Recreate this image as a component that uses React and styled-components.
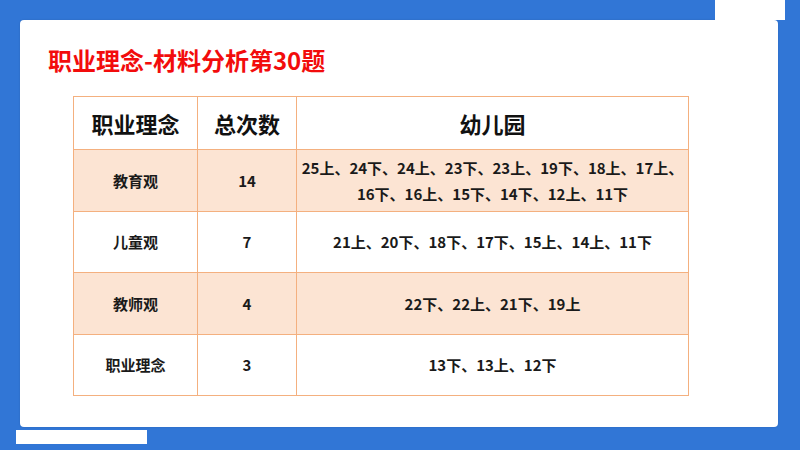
import React from "react";
import styled, { createGlobalStyle } from "styled-components";

const Global = createGlobalStyle`
  html, body { margin: 0; padding: 0; }
  body { width: 800px; height: 450px; overflow: hidden; background: #3176d6; }
  #root { width: 800px; height: 450px; }
`;

const Page = styled.div`
  position: relative;
  box-sizing: border-box;
  width: 800px;
  height: 450px;
  background: #3176d6;
  padding: 20px 22px 23px 20px;
  font-family: "Noto Sans CJK SC", "Noto Sans", sans-serif;
`;

const Card = styled.div`
  box-sizing: border-box;
  height: 100%;
  background: #ffffff;
  border-radius: 4px;
  padding: 24px 0 0 28px;
  box-shadow: 0 0 2px rgba(0, 0, 0, 0.15);
`;

const Tab = styled.div`
  position: absolute;
  background: #ffffff;
  top: ${(p) => p.$top}px;
  left: ${(p) => p.$left}px;
  width: ${(p) => p.$w}px;
  height: ${(p) => p.$h}px;
`;

const Title = styled.h1`
  margin: 0;
  color: #f20c0c;
  font-size: 24px;
  line-height: 32px;
  font-weight: 700;
  letter-spacing: 0;
`;

const Table = styled.table`
  margin: 20px 0 0 25px;
  border-collapse: collapse;
  width: 615px;
  table-layout: fixed;
`;

const Row = styled.tr`
  background: ${(p) => (p.$shaded ? "#fce4d3" : "#ffffff")};
  height: ${(p) => p.$h}px;
`;

const Head = styled.th`
  border: 1.5px solid #f4b07f;
  font-size: 22px;
  font-weight: 700;
  color: #111;
  padding: 0;
  text-align: center;
`;

const Cell = styled.td`
  border: 1.5px solid #f4b07f;
  font-size: 15px;
  font-weight: 700;
  color: #1a1a1a;
  line-height: 26px;
  padding: 0;
  text-align: center;
`;

const rows = [
  { name: "教育观", n: "14", lines: ["25上、24下、24上、23下、23上、19下、18上、17上、", "16下、16上、15下、14下、12上、11下"], shaded: true, h: 62 },
  { name: "儿童观", n: "7", lines: ["21上、20下、18下、17下、15上、14上、11下"], shaded: false, h: 61 },
  { name: "教师观", n: "4", lines: ["22下、22上、21下、19上"], shaded: true, h: 62 },
  { name: "职业理念", n: "3", lines: ["13下、13上、12下"], shaded: false, h: 61 },
];

export default function App() {
  return (
    <>
      <Global />
      <Page>
        <Tab $top={0} $left={715} $w={70} $h={20} />
        <Tab $top={430} $left={16} $w={131} $h={14} />
        <Card>
          <Title>职业理念-材料分析第30题</Title>
          <Table>
            <colgroup>
              <col style={{ width: 124 }} />
              <col style={{ width: 99 }} />
              <col style={{ width: 392 }} />
            </colgroup>
            <thead>
              <Row $h={53}>
                <Head>职业理念</Head>
                <Head>总次数</Head>
                <Head>幼儿园</Head>
              </Row>
            </thead>
            <tbody>
              {rows.map((r) => (
                <Row key={r.name} $shaded={r.shaded} $h={r.h}>
                  <Cell>{r.name}</Cell>
                  <Cell>{r.n}</Cell>
                  <Cell>
                    {r.lines.map((l, i) => (
                      <div key={i}>{l}</div>
                    ))}
                  </Cell>
                </Row>
              ))}
            </tbody>
          </Table>
        </Card>
      </Page>
    </>
  );
}
